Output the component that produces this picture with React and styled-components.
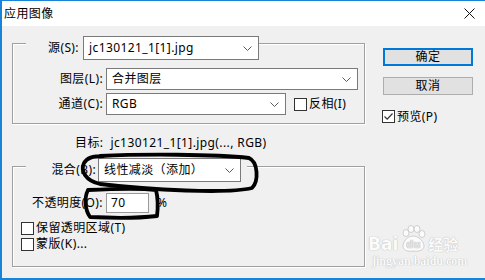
import React from 'react'
import styled, { createGlobalStyle } from 'styled-components'

const GlobalStyle = createGlobalStyle`
  html, body { margin: 0; padding: 0; background: #f0f0f0; }
  body {
    font-family: "Noto Sans", "Noto Sans CJK SC", sans-serif;
    font-size: 12px;
    letter-spacing: 0.4px;
    color: #000;
  }
`

const Dialog = styled.div`
  position: relative;
  width: 483px;
  height: 277px;
  border-left: 2px solid #1883d7;
  border-top: 1px solid #1883d7;
  border-bottom: 2px solid #1883d7;
  background: #f0f0f0;
  display: flex;
  flex-direction: column;
  overflow: hidden;
`

const TitleBar = styled.div`
  height: 25px;
  background: #fff;
  display: flex;
  align-items: center;
  justify-content: space-between;
  padding: 0 10px 0 2px;
  line-height: 16px;
`

const Body = styled.div`
  flex: 1;
  display: flex;
`

const LeftCol = styled.div`
  margin-left: 10px;
  padding-top: 17px;
  width: 353px;
  display: flex;
  flex-direction: column;
`

const RightCol = styled.div`
  margin-left: 18px;
  padding-top: 22px;
  width: 90px;
  display: flex;
  flex-direction: column;
`

const Group = styled.div`
  margin-top: ${p => p.$top || 0}px;
  border: 1px solid #a0a0a0;
  box-shadow: inset 1px 1px 0 #fff, 1px 1px 0 #fff;
  padding-bottom: ${p => p.$bottom}px;
  display: flex;
  flex-direction: column;
`

const Legend = styled.div`
  align-self: flex-start;
  margin: ${p => p.$up}px 0 0 13px;
  padding-right: ${p => p.$pr || 0}px;
  background: #f0f0f0;
  display: flex;
  align-items: center;
  gap: ${p => p.$gap}px;
`

const Row = styled.div`
  display: flex;
  align-items: center;
  margin-top: ${p => p.$top || 0}px;
  height: ${p => p.$h || 22}px;
  padding-left: ${p => p.$pl || 0}px;
`

const Label = styled.span`
  width: ${p => p.$w}px;
  text-align: right;
  white-space: nowrap;
  line-height: 16px;
  flex: none;
`

const Select = styled.div`
  box-sizing: border-box;
  width: ${p => p.$w}px;
  height: ${p => p.$h || 22}px;
  margin-left: ${p => p.$ml || 0}px;
  border: 1px solid #7a7a7a;
  background: #fff;
  display: flex;
  align-items: center;
  justify-content: space-between;
  padding: 0 6px 0 5px;
  line-height: 16px;
  flex: none;
`

const Chevron = () => (
  <svg width="9" height="5" viewBox="0 0 9 5">
    <path d="M0.5 0.5 L4.5 4.5 L8.5 0.5" fill="none" stroke="#5a5a5a" strokeWidth="1" />
  </svg>
)

const Input = styled.div`
  box-sizing: border-box;
  width: 43px;
  height: 20px;
  margin-left: 3px;
  border: 1px solid #9a9a9a;
  background: #fff;
  padding-left: 4px;
  line-height: 18px;
`

const Box = styled.span`
  box-sizing: border-box;
  width: 13px;
  height: 13px;
  border: 1px solid #333;
  background: #fff;
  flex: none;
  margin-left: ${p => p.$ml || 0}px;
  margin-right: 2px;
  display: flex;
  align-items: center;
  justify-content: center;
`

const Text = styled.span`
  line-height: 16px;
  white-space: nowrap;
  margin-left: ${p => p.$ml || 0}px;
`

const Target = styled.div`
  margin: 11px 0 0 63px;
  line-height: 16px;
  white-space: nowrap;
`

const Button = styled.div`
  box-sizing: border-box;
  height: 18px;
  margin-top: ${p => p.$top || 0}px;
  border: ${p => (p.$primary ? '2px solid #0078d7' : '1px solid #adadad')};
  background: #e1e1e1;
  display: flex;
  align-items: center;
  justify-content: center;
  line-height: 14px;
`

const Check = styled.div`
  display: flex;
  align-items: center;
  height: 13px;
  margin: 15px 0 0 -1px;
`

const Overlay = styled.svg`
  position: absolute;
  left: -2px;
  top: -1px;
  pointer-events: none;
`

const Watermark = styled.div`
  position: absolute;
  left: 366px;
  top: 224px;
  color: #fbfbfb;
  letter-spacing: 0;
  text-shadow: 0 0 1px #b8b8b8, 0 0 1px #c8c8c8;
  pointer-events: none;
`

const Brand = styled.div`
  display: flex;
  align-items: flex-end;
  font-family: "DejaVu Sans", sans-serif;
  font-weight: bold;
  font-size: 17px;
  line-height: 18px;
  span.cn { font-family: "Noto Sans CJK SC", sans-serif; font-size: 15px; font-weight: bold; }
`

const Site = styled.div`
  font-family: "Liberation Serif", serif;
  font-weight: bold;
  font-size: 12px;
  line-height: 12px;
  margin: 2px 0 0 4px;
`

const Paw = () => (
  <svg width="28" height="28" viewBox="0 0 28 28" style={{ margin: '0 1px' }}>
    <g fill="#fbfbfb" stroke="#c4c4c4" strokeWidth="0.8">
      <ellipse cx="7" cy="8" rx="3" ry="3.5" />
      <ellipse cx="12" cy="4" rx="3" ry="3.5" />
      <ellipse cx="18" cy="4" rx="3" ry="3.5" />
      <ellipse cx="23" cy="9" rx="3" ry="3.5" />
      <path d="M14 11 C8 11 4 17 4 21 C4 25 8 27 14 26 C20 27 25 25 25 21 C25 17 20 11 14 11 Z" />
    </g>
    <text x="14.5" y="23" textAnchor="middle" fontFamily="DejaVu Sans, sans-serif" fontWeight="bold"
      fontSize="10" fill="#e2e2e2">du</text>
  </svg>
)

export default function App() {
  return (
    <>
      <GlobalStyle />
      <Dialog>
        <TitleBar>
          <span>应用图像</span>
          <svg width="11" height="11" viewBox="0 0 11 11">
            <path d="M0.5 0.5 L10.5 10.5 M10.5 0.5 L0.5 10.5" stroke="#111" strokeWidth="1" />
          </svg>
        </TitleBar>
        <Body>
          <LeftCol>
            <Group $bottom={8}>
              <Legend $up={-8} $gap={4}>
                <Label $w={53}>源(S):</Label>
                <Select $w={176} $h={24}>
                  <span>jc130121_1[1].jpg</span>
                  <Chevron />
                </Select>
              </Legend>
              <Row $top={8}>
                <Label $w={90}>图层(L):</Label>
                <Select $w={252} $ml={3}>
                  <span>合并图层</span>
                  <Chevron />
                </Select>
              </Row>
              <Row $top={3}>
                <Label $w={90}>通道(C):</Label>
                <Select $w={180} $ml={3}>
                  <span>RGB</span>
                  <Chevron />
                </Select>
                <Box $ml={8} />
                <Text>反相(I)</Text>
              </Row>
            </Group>

            <Target>目标:&nbsp; jc130121_1[1].jpg(..., RGB)</Target>

            <Group $top={15} $bottom={14}>
              <Legend $up={-9} $gap={2} $pr={6}>
                <Label $w={70}>混合(B):</Label>
                <Select $w={143} $h={24}>
                  <span>线性减淡（添加）</span>
                  <Chevron />
                </Select>
              </Legend>
              <Row $top={11} $h={20}>
                <Label $w={90}>不透明度(O):</Label>
                <Input>70</Input>
                <Text $ml={8}>%</Text>
              </Row>
              <Row $top={7} $h={16} $pl={8}>
                <Box />
                <Text>保留透明区域(T)</Text>
              </Row>
              <Row $h={16} $pl={8}>
                <Box />
                <Text>蒙版(K)...</Text>
              </Row>
            </Group>
          </LeftCol>

          <RightCol>
            <Button $primary>确定</Button>
            <Button $top={11}>取消</Button>
            <Check>
              <Box>
                <svg width="11" height="11" viewBox="0 0 11 11">
                  <path d="M1.5 5.5 L4.2 8.2 L9.5 2.5" fill="none" stroke="#333" strokeWidth="1.2" />
                </svg>
              </Box>
              <Text>预览(P)</Text>
            </Check>
          </RightCol>
        </Body>

        <Watermark>
          <Brand>
            <span>Bai</span>
            <Paw />
            <span className="cn">经验</span>
          </Brand>
          <Site>jingyan.baidu.com</Site>
        </Watermark>

        <Overlay width="485" height="280" viewBox="0 0 485 280">
          <g fill="none" stroke="#000" strokeWidth="3.8" strokeLinecap="round" strokeLinejoin="round">
            <path d="M100 156 C140 154 215 154 249 158 C258 162 259 181 252 188 C228 194 150 190 100 184 C86 181 80 171 84 163 C87 158 92 156 104 156" />
            <path d="M88 190 C110 189 140 188 156 190 C158 198 158 208 157 216 C140 218 110 218 90 217 C85 210 84 198 88 190 Z" />
          </g>
        </Overlay>
      </Dialog>
    </>
  )
}
